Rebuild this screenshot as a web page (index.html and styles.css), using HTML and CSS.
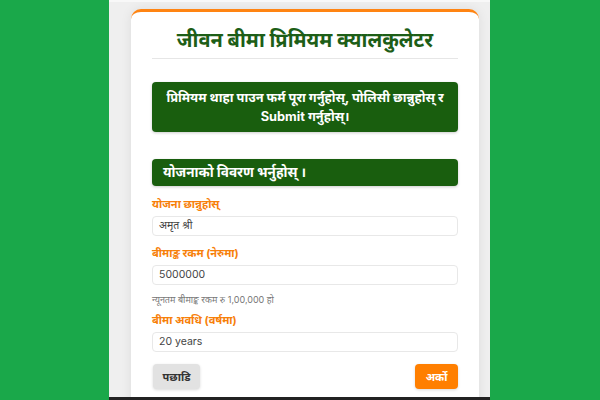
FILE: index.html
```html
<!DOCTYPE html>
<html lang="ne">
<head>
<meta charset="utf-8">
<title>जीवन बीमा प्रिमियम क्यालकुलेटर</title>
<link rel="stylesheet" href="styles.css">
</head>
<body>
<div class="frame">
  <div class="card">
    <h1 class="title">जीवन बीमा प्रिमियम क्यालकुलेटर</h1>
    <div class="banner">प्रिमियम थाहा पाउन फर्म पूरा गर्नुहोस्, पोलिसी छान्नुहोस् र Submit गर्नुहोस्।</div>
    <div class="section">योजनाको विवरण भर्नुहोस् ।</div>
    <div class="field f1">
      <div class="label">योजना छान्नुहोस्</div>
      <div class="input">अमृत श्री</div>
    </div>
    <div class="field f2">
      <div class="label">बीमाङ्क रकम (नेरुमा)</div>
      <div class="input">5000000</div>
      <div class="help">न्यूनतम बीमाङ्क रकम रु 1,00,000 हो</div>
    </div>
    <div class="field f3">
      <div class="label">बीमा अवधि (वर्षमा)</div>
      <div class="input">20 years</div>
    </div>
    <div class="actions">
      <button class="btn back">पछाडि</button>
      <button class="btn next">अर्को</button>
    </div>
  </div>
</div>
</body>
</html>
```
FILE: styles.css
```css
html, body {
  margin: 0;
  padding: 0;
}
body {
  background: #1aa84a;
  font-family: "Inter", "Noto Sans", sans-serif;
  width: 600px;
  height: 400px;
  overflow: hidden;
}
.frame {
  width: 381px;
  margin-left: 109px;
  background: #efefef;
  border-top: 2px solid #f8f8f8;
  border-bottom: 3px solid #222;
  padding: 7px 11px 0 22px;
  box-sizing: border-box;
  height: 400px;
  overflow: hidden;
}
.card {
  width: 348px;
  background: #fff;
  border-top: 3px solid #ff8412;
  border-radius: 10px 10px 0 0;
  box-shadow: 0 0 12px rgba(0, 0, 0, 0.08);
  padding: 0 21px 20px 21px;
  box-sizing: border-box;
  height: 420px;
}
.title {
  margin: 0;
  padding: 12px 0 2px;
  font-size: 20px;
  line-height: 32px;
  font-weight: 700;
  color: #1d5e17;
  text-align: center;
  border-bottom: 1px solid #e6e6e6;
}
.banner {
  margin-top: 23px;
  background: #195e0e;
  color: #fff;
  font-weight: 700;
  font-size: 12.8px;
  line-height: 19px;
  padding: 6px 5px;
  text-align: center;
  border-radius: 4px;
  box-shadow: 0 1px 3px rgba(0, 0, 0, 0.2);
}
.section {
  margin-top: 27px;
  background: #195e0e;
  color: #fff;
  font-weight: 700;
  font-size: 13.5px;
  line-height: 27px;
  padding: 0 11px;
  border-radius: 4px;
  box-shadow: 0 1px 3px rgba(0, 0, 0, 0.2);
}
.field {
  display: flex;
  flex-direction: column;
}
.f1 { margin-top: 10px; }
.f2 { margin-top: 9px; }
.f3 { margin-top: 5px; }
.label {
  color: #f7800a;
  font-weight: 700;
  font-size: 11px;
  line-height: 16px;
}
.input {
  margin-top: 4px;
  height: 20px;
  border: 1px solid #e8e8e8;
  border-radius: 4px;
  box-sizing: border-box;
  padding: 0 6px;
  font-size: 10.5px;
  line-height: 18px;
  color: #444;
}
.help {
  margin-top: 8px;
  font-size: 9px;
  line-height: 14px;
  color: #777;
}
.actions {
  margin-top: 12px;
  display: flex;
  justify-content: space-between;
}
.btn {
  border: none;
  height: 25px;
  border-radius: 4px;
  font-family: inherit;
  font-weight: 700;
  font-size: 11px;
  padding: 0;
}
.back {
  width: 47px;
  margin-left: 1px;
  background: #e2e2e2;
  color: #333;
  box-shadow: 0 1px 3px rgba(0, 0, 0, 0.15);
}
.next {
  width: 43px;
  background: #ff7f00;
  color: #fff;
  box-shadow: 0 1px 3px rgba(0, 0, 0, 0.15);
}
```
